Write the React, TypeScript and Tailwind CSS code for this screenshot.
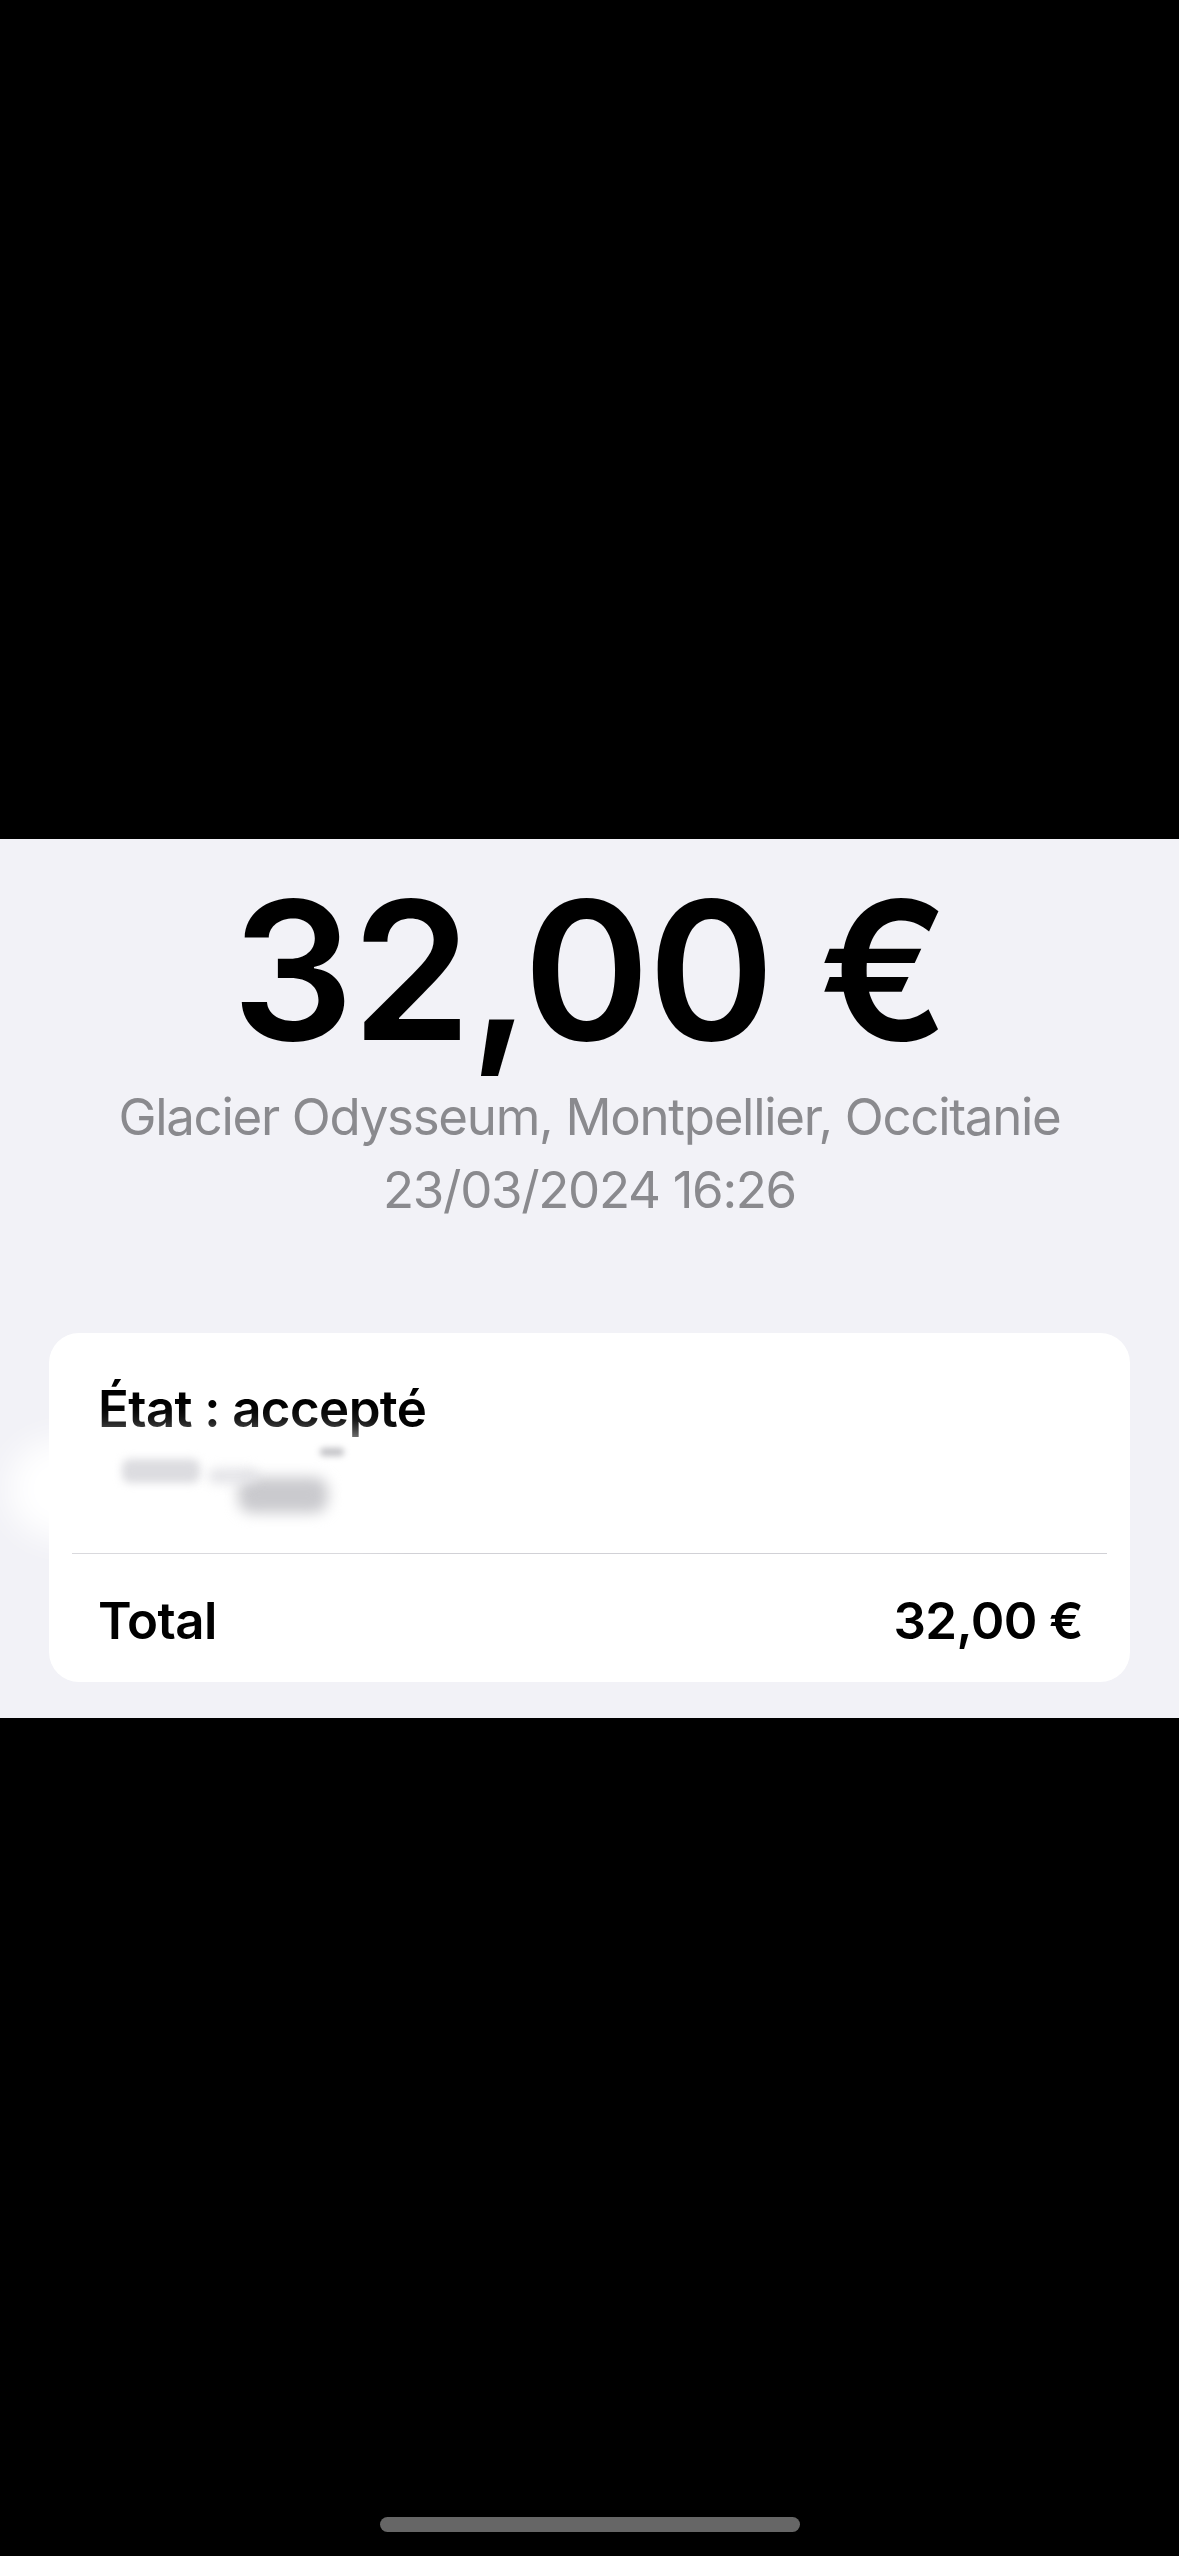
export default function App() {
  return (
    <div
      className="flex min-h-[2556px] w-[1179px] flex-col bg-black"
      style={{ fontFamily: "Inter, 'Liberation Sans', sans-serif" }}
    >
      {/* top dark area */}
      <div className="h-[839px] bg-black" />

      {/* receipt section */}
      <div className="flex flex-col bg-[#f2f2f7] px-[49px] pt-[35px] pb-[36px]">
        <div className="text-center text-[192px] leading-[192px] font-semibold tracking-[-2px] text-black">
          32,00 €
        </div>
        <div className="mt-[14px] text-center text-[51px] leading-[73px] tracking-[-1.3px] text-[#8a8a8e]">
          <div>Glacier Odysseum, Montpellier, Occitanie</div>
          <div>23/03/2024 16:26</div>
        </div>

        <div className="mt-[107px] rounded-[30px] bg-white">
          <div className="relative px-[49px] pt-[45px]">
            <div className="text-[51px] leading-[61px] font-semibold tracking-[-0.6px] text-black">État : accepté</div>
            {/* redacted line */}
            <div className="relative h-[114px]">
              <div className="absolute top-[0px] left-[-90px] h-[100px] w-[400px] rounded-full bg-white blur-lg" />
              <div className="absolute top-[20px] left-[24px] h-[24px] w-[78px] rounded-[8px] bg-[#dcdce0] blur-[4px]" />
              <div className="absolute top-[38px] left-[140px] h-[36px] w-[90px] rounded-[14px] bg-[#cacace] blur-[7px]" />
              <div className="absolute top-[30px] left-[110px] h-[14px] w-[50px] rounded-full bg-[#e2e2e6] blur-[6px]" />
              <div className="absolute top-[9px] left-[222px] h-[8px] w-[24px] rounded-full bg-[#c0c0c4] blur-[3px]" />
            </div>
          </div>
          <div className="mx-[23px] h-px bg-[#d1d1d6]" />
          <div className="flex items-center justify-between pr-[47px] pl-[49px] pt-[36px] pb-[31px] text-[51px] leading-[61px] font-semibold tracking-[-0.6px] text-black">
            <span>Total</span>
            <span>32,00 €</span>
          </div>
        </div>
      </div>

      {/* bottom dark area with home indicator */}
      <div className="flex flex-1 items-end justify-center pb-[24px]">
        <div className="h-[15px] w-[420px] rounded-full bg-[#666666]" />
      </div>
    </div>
  );
}
